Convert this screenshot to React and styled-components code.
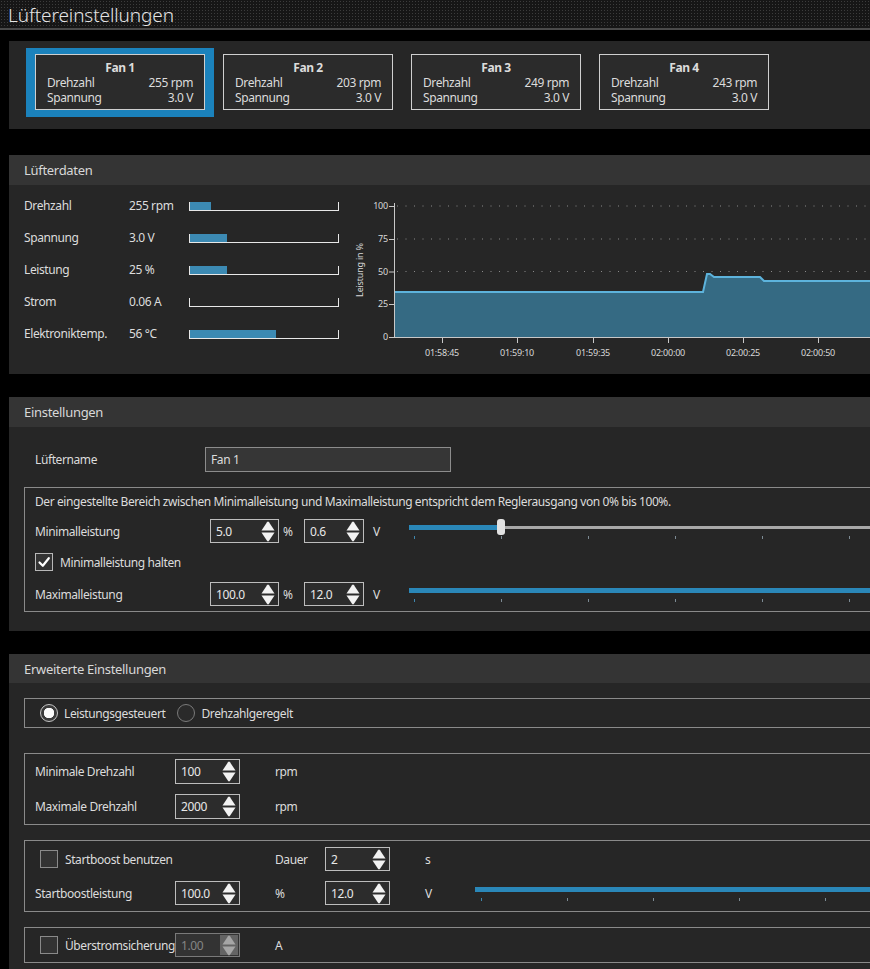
import React from "react";
import styled, { createGlobalStyle, css } from "styled-components";

const GlobalStyle = createGlobalStyle`
  html, body {
    margin: 0;
    padding: 0;
    background: #000;
    overflow: hidden;
  }
  body {
    font-family: "Noto Sans", "Open Sans", sans-serif;
    font-size: 12px;
    letter-spacing: -0.4px;
    color: #dcdcdc;
  }
`;

const fans = [
  { name: "Fan 1", rpm: "255 rpm", volt: "3.0 V" },
  { name: "Fan 2", rpm: "203 rpm", volt: "3.0 V" },
  { name: "Fan 3", rpm: "249 rpm", volt: "3.0 V" },
  { name: "Fan 4", rpm: "243 rpm", volt: "3.0 V" },
];

const sensors = [
  { label: "Drehzahl", value: "255 rpm", fill: 21 },
  { label: "Spannung", value: "3.0 V", fill: 37 },
  { label: "Leistung", value: "25 %", fill: 37 },
  { label: "Strom", value: "0.06 A", fill: 0 },
  { label: "Elektroniktemp.", value: "56 °C", fill: 86 },
];

const xTicks = [
  { x: 103, t: "01:58:45" },
  { x: 178, t: "01:59:10" },
  { x: 254, t: "01:59:35" },
  { x: 329, t: "02:00:00" },
  { x: 404, t: "02:00:25" },
  { x: 479, t: "02:00:50" },
];

const yTicks = [
  { v: "100", y: 16 },
  { v: "75", y: 49 },
  { v: "50", y: 81.5 },
  { v: "25", y: 114 },
  { v: "0", y: 147 },
];

const linePts = "55,102 364,102 368,84 371,84 375,87 421,87 425,91 700,91";

function App() {
  return (
    <>
      <GlobalStyle />
      <Page>
        <TitleBar>Lüftereinstellungen</TitleBar>
        <Main>
          <FanPanel>
            {fans.map((f, i) => (
              <FanSlot key={f.name} $active={i === 0}>
                <FanCard>
                  <FanName>{f.name}</FanName>
                  <FanLine>
                    <span>Drehzahl</span>
                    <span>{f.rpm}</span>
                  </FanLine>
                  <FanLine>
                    <span>Spannung</span>
                    <span>{f.volt}</span>
                  </FanLine>
                </FanCard>
              </FanSlot>
            ))}
          </FanPanel>

          <Panel>
            <PanelHeader>Lüfterdaten</PanelHeader>
            <DataBody>
              <SensorList>
                {sensors.map((s) => (
                  <SensorRow key={s.label}>
                    <SensorLabel>{s.label}</SensorLabel>
                    <SensorValue>{s.value}</SensorValue>
                    <Meter>
                      <MeterFill style={{ width: s.fill }} />
                    </Meter>
                  </SensorRow>
                ))}
              </SensorList>
              <Chart width="700" height="180" viewBox="0 0 700 180">
                {yTicks.slice(0, 4).map((t) => (
                  <line key={t.v} x1="58" x2="700" y1={t.y} y2={t.y} stroke="#8a8a8a" strokeWidth="1" strokeDasharray="1 7.5" />
                ))}
                <polygon points={`${linePts} 700,147 55,147`} fill="#356a83" />
                <polyline points={linePts} fill="none" stroke="#5db3dc" strokeWidth="2" />
                <line x1="55.5" x2="55.5" y1="13" y2="147" stroke="#c8c8c8" />
                <line x1="55" x2="700" y1="147.5" y2="147.5" stroke="#c8c8c8" />
                {yTicks.map((t) => (
                  <g key={t.v}>
                    <line x1="50" x2="55" y1={t.y + 0.5} y2={t.y + 0.5} stroke="#c8c8c8" />
                    <text x="49" y={t.y + 3} textAnchor="end" fontSize="9" fill="#d8d8d8">{t.v}</text>
                  </g>
                ))}
                {xTicks.map((t) => (
                  <g key={t.t}>
                    <line x1={t.x + 0.5} x2={t.x + 0.5} y1="148" y2="153" stroke="#c8c8c8" />
                    <text x={t.x} y="166" textAnchor="middle" fontSize="9" fill="#d8d8d8">{t.t}</text>
                  </g>
                ))}
                <text transform="translate(24 80) rotate(-90)" textAnchor="middle" fontSize="9" fill="#d8d8d8">Leistung in %</text>
              </Chart>
            </DataBody>
          </Panel>

          <Panel>
            <PanelHeader>Einstellungen</PanelHeader>
            <SettingsBody>
              <NameRow>
                <NameLabel>Lüftername</NameLabel>
                <TextField>Fan 1</TextField>
              </NameRow>
              <GroupBox $pad="6px 0 5px 10px">
                <Note>Der eingestellte Bereich zwischen Minimalleistung und Maximalleistung entspricht dem Reglerausgang von 0% bis 100%.</Note>
                <FormRow $mt={10}>
                  <FieldLabel $w={175}>Minimalleistung</FieldLabel>
                  <Spinner value="5.0" width={69} />
                  <Unit $w={25} $pl={4}>%</Unit>
                  <Spinner value="0.6" width={60} />
                  <Unit $w={45} $pl={9}>V</Unit>
                  <Slider width={882} pos={10} />
                </FormRow>
                <FormRow $mt={10} $h={18}>
                  <Check checked label="Minimalleistung halten" />
                </FormRow>
                <FormRow $mt={11}>
                  <FieldLabel $w={175}>Maximalleistung</FieldLabel>
                  <Spinner value="100.0" width={69} />
                  <Unit $w={25} $pl={4}>%</Unit>
                  <Spinner value="12.0" width={60} />
                  <Unit $w={45} $pl={9}>V</Unit>
                  <Slider width={882} />
                </FormRow>
              </GroupBox>
            </SettingsBody>
          </Panel>

          <Panel>
            <PanelHeader $h={29}>Erweiterte Einstellungen</PanelHeader>
            <AdvancedBody>
              <GroupBox $pad="5px 0 5px 15px">
                <FormRow $h={18}>
                  <Radio checked label="Leistungsgesteuert" />
                  <Radio label="Drehzahlgeregelt" />
                </FormRow>
              </GroupBox>
              <GroupBox $pad="5px 0 5px 10px" $mt={25}>
                <FormRow $h={25}>
                  <FieldLabel $w={140}>Minimale Drehzahl</FieldLabel>
                  <Spinner value="100" width={65} height={25} />
                  <Unit $w={85} $pl={35}>rpm</Unit>
                </FormRow>
                <FormRow $h={25} $mt={10}>
                  <FieldLabel $w={140}>Maximale Drehzahl</FieldLabel>
                  <Spinner value="2000" width={65} height={25} />
                  <Unit $w={85} $pl={35}>rpm</Unit>
                </FormRow>
              </GroupBox>
              <GroupBox $pad="6px 0 6px 10px" $mt={15}>
                <FormRow>
                  <FieldLabel $w={140}>
                    <Check label="Startboost benutzen" indent />
                  </FieldLabel>
                  <Unit $w={65} />
                  <Unit $w={85} $pl={35}>Dauer</Unit>
                  <Spinner value="2" width={65} />
                  <Unit $w={85} $pl={35}>s</Unit>
                </FormRow>
                <FormRow $mt={10}>
                  <FieldLabel $w={140}>Startboostleistung</FieldLabel>
                  <Spinner value="100.0" width={65} />
                  <Unit $w={85} $pl={35}>%</Unit>
                  <Spinner value="12.0" width={65} />
                  <Unit $w={85} $pl={35}>V</Unit>
                  <Slider width={872} inset={6} />
                </FormRow>
              </GroupBox>
              <GroupBox $pad="5px 0 5px 10px" $mt={15}>
                <FormRow>
                  <FieldLabel $w={140}>
                    <Check label="Überstromsicherung" indent />
                  </FieldLabel>
                  <Spinner value="1.00" width={65} disabled />
                  <Unit $w={85} $pl={35}>A</Unit>
                </FormRow>
              </GroupBox>
            </AdvancedBody>
          </Panel>
        </Main>
      </Page>
    </>
  );
}

function Spinner({ value, width, height = 24, disabled }) {
  const arrow = disabled ? "#a6a6a6" : "#f2f2f2";
  return (
    <SpinBox $w={width} $h={height} $disabled={disabled}>
      <SpinText>{value}</SpinText>
      <SpinArrows $disabled={disabled}>
        <svg width="14" height="21" viewBox="0 0 14 21">
          <path d="M0.5 9.5 L6 1.2 Q7 0 8 1.2 L13.5 9.5 Z" fill={arrow} />
          <path d="M0.5 11.5 L6 19.8 Q7 21 8 19.8 L13.5 11.5 Z" fill={arrow} />
        </svg>
      </SpinArrows>
    </SpinBox>
  );
}

function Slider({ width, pos, inset = 5 }) {
  const inner = width - inset * 2;
  const thumbX = pos != null ? inset + (inner * pos) / 100 : null;
  return (
    <SliderBox style={{ width }}>
      <Track>
        <TrackFill style={{ width: thumbX != null ? thumbX : "100%" }} />
        {thumbX != null && <Thumb style={{ left: thumbX - 4 }} />}
      </Track>
      <Ticks style={{ padding: `0 ${inset}px` }}>
        {Array.from({ length: 11 }).map((_, i) => (
          <Tick key={i} $first={i === 0} />
        ))}
      </Ticks>
    </SliderBox>
  );
}

function Check({ checked, label, indent }) {
  return (
    <CheckWrap $indent={indent}>
      <CheckBox $checked={checked}>
        {checked && (
          <svg width="14" height="14" viewBox="0 0 14 14">
            <path d="M2.5 7.5 L5.8 10.8 L11.8 3.2" fill="none" stroke="#fff" strokeWidth="2.2" strokeLinecap="round" strokeLinejoin="round" />
          </svg>
        )}
      </CheckBox>
      <span>{label}</span>
    </CheckWrap>
  );
}

function Radio({ checked, label }) {
  return (
    <RadioWrap>
      <RadioDot $checked={checked} />
      <span>{label}</span>
    </RadioWrap>
  );
}

const Page = styled.div`
  width: 870px;
  height: 969px;
  overflow: hidden;
  background: #000;
`;

const TitleBar = styled.div`
  height: 28px;
  border-bottom: 2px solid #4a4a4a;
  background-color: #161616;
  background-image: radial-gradient(#3c3c3c 0.8px, transparent 0.9px);
  background-size: 3px 3px;
  padding-left: 8px;
  font-size: 19px;
  line-height: 30px;
  color: #e4e4e4;
  font-weight: 300;
  letter-spacing: -0.1px;
`;

const Main = styled.div`
  width: 1100px;
  padding: 11px 0 0 9px;
  display: flex;
  flex-direction: column;
  gap: 23px;
`;

const FanPanel = styled.div`
  display: flex;
  background: #262626;
  padding: 7px 17px 12px;
  margin-bottom: 3px;
`;

const FanSlot = styled.div`
  padding: 6px 9px 7px;
  background: ${(p) => (p.$active ? "#1b82bc" : "transparent")};
`;

const FanCard = styled.div`
  width: 170px;
  height: 56px;
  box-sizing: border-box;
  border: 1px solid #cfcfcf;
  background: #2b2b2b;
  padding: 5px 11px 0 11px;
  line-height: 15px;
`;

const FanName = styled.div`
  text-align: center;
  font-weight: 700;
`;

const FanLine = styled.div`
  display: flex;
  justify-content: space-between;
`;

const Panel = styled.section`
  background: #262626;
`;

const PanelHeader = styled.div`
  height: ${(p) => p.$h || 30}px;
  background: #343434;
  padding-left: 15px;
  font-size: 13px;
  letter-spacing: -0.3px;
  display: flex;
  align-items: center;
  color: #d8d8d8;
`;

const DataBody = styled.div`
  height: 189px;
  display: flex;
  align-items: flex-start;
`;

const SensorList = styled.div`
  padding: 4px 0 0 15px;
`;

const SensorRow = styled.div`
  height: 32px;
  display: flex;
  align-items: center;
`;

const SensorLabel = styled.div`
  width: 105px;
`;

const SensorValue = styled.div`
  width: 60px;
`;

const Meter = styled.div`
  width: 150px;
  height: 9px;
  box-sizing: border-box;
  border: 1px solid #e8e8e8;
  border-top: none;
  margin-top: 2px;
`;

const MeterFill = styled.div`
  height: 8px;
  background: #3c8ab3;
`;

const Chart = styled.svg`
  display: block;
  margin-top: 5px;
  font-family: "Noto Sans", sans-serif;
  letter-spacing: -0.2px;
`;

const SettingsBody = styled.div`
  padding: 20px 0 19px 15px;
`;

const NameRow = styled.div`
  display: flex;
  align-items: center;
  height: 25px;
  padding-left: 11px;
  margin-bottom: 15px;
`;

const NameLabel = styled.div`
  width: 170px;
`;

const TextField = styled.div`
  width: 246px;
  height: 25px;
  box-sizing: border-box;
  border: 1px solid #8c8c8c;
  background: #363636;
  padding-left: 5px;
  line-height: 23px;
`;

const GroupBox = styled.div`
  border: 1px solid #8a8a8a;
  border-right: none;
  padding: ${(p) => p.$pad};
  margin-top: ${(p) => p.$mt || 0}px;
  display: flex;
  flex-direction: column;
`;

const Note = styled.div`
  line-height: 15px;
  height: 15px;
`;

const FormRow = styled.div`
  display: flex;
  align-items: center;
  height: ${(p) => p.$h || 24}px;
  margin-top: ${(p) => p.$mt || 0}px;
`;

const FieldLabel = styled.div`
  width: ${(p) => p.$w}px;
  flex-shrink: 0;
`;

const Unit = styled.div`
  width: ${(p) => p.$w}px;
  padding-left: ${(p) => p.$pl || 0}px;
  box-sizing: border-box;
  flex-shrink: 0;
`;

const SpinBox = styled.div`
  width: ${(p) => p.$w}px;
  height: ${(p) => p.$h}px;
  box-sizing: border-box;
  flex-shrink: 0;
  display: flex;
  align-items: stretch;
  border: 1px solid ${(p) => (p.$disabled ? "#7a7a7a" : "#bdbdbd")};
  background: ${(p) => (p.$disabled ? "#333" : "#2c2c2c")};
  color: ${(p) => (p.$disabled ? "#858585" : "#e8e8e8")};
`;

const SpinText = styled.div`
  flex: 1;
  padding-left: 5px;
  display: flex;
  align-items: center;
`;

const SpinArrows = styled.div`
  width: 18px;
  display: flex;
  align-items: center;
  justify-content: center;
  margin-right: 1px;
  ${(p) =>
    p.$disabled &&
    css`
      background: #646464;
      margin: 1px 1px 1px 0;
    `}
`;

const SliderBox = styled.div`
  flex-shrink: 0;
  height: 24px;
  padding-top: 6px;
  box-sizing: border-box;
`;

const Track = styled.div`
  position: relative;
  height: 3px;
  margin-top: 1px;
  background: #a8a8a8;
`;

const TrackFill = styled.div`
  position: absolute;
  left: 0;
  top: -1px;
  height: 5px;
  background: #2a87b8;
`;

const Thumb = styled.div`
  position: absolute;
  top: -7px;
  width: 8px;
  height: 16px;
  border-radius: 3px;
  background: #e2e2e2;
`;

const Ticks = styled.div`
  display: flex;
  justify-content: space-between;
  margin-top: 7px;
`;

const Tick = styled.div`
  width: 1px;
  height: 3px;
  background: ${(p) => (p.$first ? "#3f86ad" : "#7c8a93")};
`;

const CheckWrap = styled.div`
  display: flex;
  align-items: center;
  gap: 7px;
  padding-left: ${(p) => (p.$indent ? 5 : 0)}px;
  white-space: nowrap;
`;

const CheckBox = styled.div`
  width: 18px;
  height: 18px;
  flex-shrink: 0;
  box-sizing: border-box;
  border: 1px solid ${(p) => (p.$checked ? "#b8b8b8" : "#8a8a8a")};
  background: #333;
  display: flex;
  align-items: center;
  justify-content: center;
`;

const RadioWrap = styled.div`
  display: flex;
  align-items: center;
  gap: 6px;
  margin-right: 12px;
`;

const RadioDot = styled.div`
  width: 18px;
  height: 18px;
  flex-shrink: 0;
  box-sizing: border-box;
  border-radius: 50%;
  border: 1px solid ${(p) => (p.$checked ? "#c4c4c4" : "#7a7a7a")};
  background: ${(p) => (p.$checked ? "radial-gradient(circle, #fafafa 0 5px, #3a3a3a 5.5px)" : "#2a2a2a")};
`;

const AdvancedBody = styled.div`
  padding: 15px 0 20px 15px;
`;

export default App;
